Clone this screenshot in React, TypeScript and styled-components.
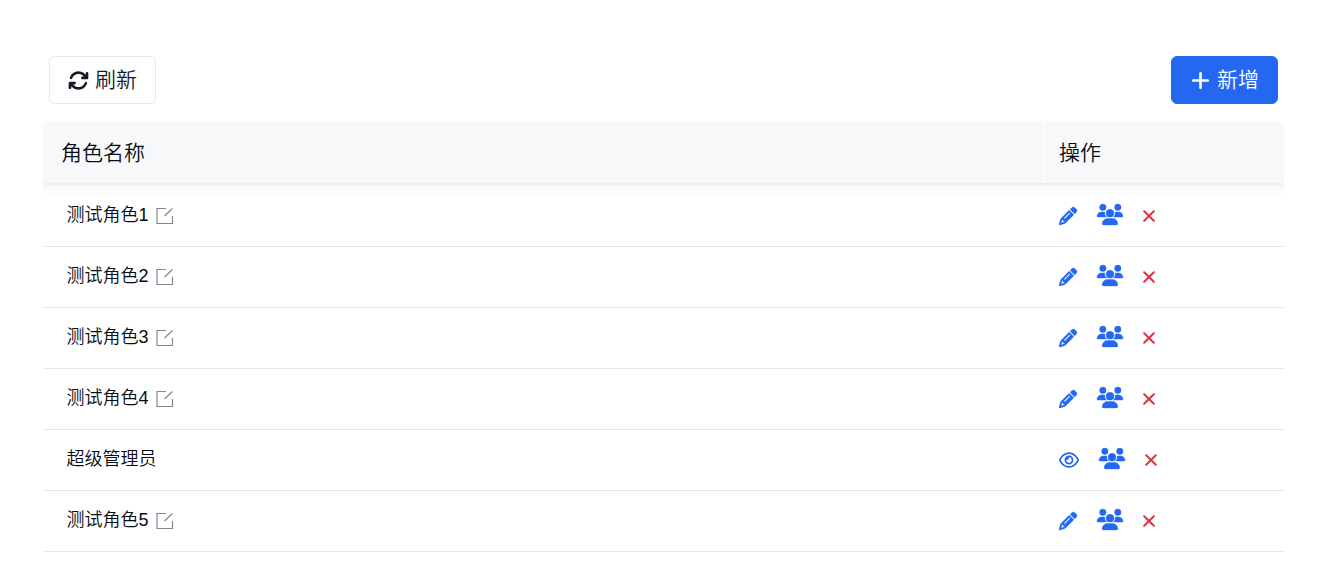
import React from 'react';
import styled, { createGlobalStyle } from 'styled-components';
import { FaArrowsRotate, FaPencil, FaPlus, FaRegEye, FaUsers } from 'react-icons/fa6';

const GlobalStyle = createGlobalStyle`
  * { box-sizing: border-box; }
  body {
    margin: 0;
    background: #fff;
    color: #080c14;
    font-family: "Liberation Sans", "Noto Sans CJK SC", sans-serif;
    font-weight: 350;
  }
`;

const Page = styled.main`
  width: 1326px;
  height: 567px;
  padding: 56px 42px 0 43px;
  overflow: hidden;
`;

const Toolbar = styled.div`
  display: flex;
  justify-content: space-between;
  padding: 0 6px;
  margin-bottom: 17px;
`;

const Button = styled.button<{ $primary?: boolean }>`
  display: flex;
  align-items: center;
  justify-content: center;
  gap: 6px;
  width: 107px;
  height: 48px;
  padding: 0;
  border: 1px solid ${(p) => (p.$primary ? '#2468f2' : '#e8e9eb')};
  border-radius: 6px;
  background: ${(p) => (p.$primary ? '#2468f2' : '#fff')};
  color: ${(p) => (p.$primary ? '#fff' : '#151b26')};
  font: inherit;
  font-size: 21px;
  line-height: 46px;
  svg { flex: none; }
`;

const Table = styled.div`
  width: 1241px;
`;

const Header = styled.div`
  position: relative;
  display: flex;
  height: 64px;
  margin-bottom: 1px;
  border-bottom: 2px solid #eceef0;
  border-radius: 6px 6px 0 0;
  background: #f7f8fa;
  font-size: 21px;
  line-height: 63px;
  &::after {
    content: '';
    position: absolute;
    top: 64px;
    left: 0;
    right: 0;
    height: 12px;
    background: linear-gradient(#f8f8f8, #fff);
  }
`;

const HeaderCell = styled.div<{ $actions?: boolean }>`
  width: ${(p) => (p.$actions ? '241px' : '1000px')};
  padding-left: ${(p) => (p.$actions ? '15px' : '18px')};
  border-left: ${(p) => (p.$actions ? '1px solid #fff' : 'none')};
`;

const Row = styled.div`
  display: flex;
  height: 61px;
  border-bottom: 1px solid #e8e9eb;
`;

const NameCell = styled.div`
  display: flex;
  align-items: center;
  gap: 8px;
  width: 1000px;
  padding: 0 0 1px 23.5px;
  font-size: 18px;
  line-height: 27px;
`;

const EditMark = styled.svg`
  margin-top: 1px;
  overflow: visible;
  fill: none;
  stroke: #84868c;
  stroke-width: 1.2;
`;

const ActionCell = styled.div`
  display: flex;
  align-items: center;
  width: 241px;
  padding: 0 0 0 16px;
  color: #2468f2;
`;

const PencilIcon = styled(FaPencil)`
  width: 18px;
  height: 18px;
  overflow: visible;
  stroke: #2468f2;
  stroke-width: 8;
`;

const UsersIcon = styled(FaUsers)`
  width: 26px;
  height: 21px;
  margin: -3px 20px 0 20px;
  overflow: visible;
  stroke: #2468f2;
  stroke-width: 10;
`;

const RemoveIcon = styled.svg`
  width: 12px;
  height: 12px;
  fill: none;
  stroke: #dc3545;
  stroke-width: 2;
  stroke-linecap: round;
`;

const roles = [
  { name: '测试角色1', editable: true },
  { name: '测试角色2', editable: true },
  { name: '测试角色3', editable: true },
  { name: '测试角色4', editable: true },
  { name: '超级管理员', editable: false },
  { name: '测试角色5', editable: true },
];

export default function App() {
  return (
    <Page>
      <GlobalStyle />
      <Toolbar>
        <Button><FaArrowsRotate size={21} /><span>刷新</span></Button>
        <Button $primary><FaPlus size={21} /><span>新增</span></Button>
      </Toolbar>
      <Table>
        <Header>
          <HeaderCell>角色名称</HeaderCell>
          <HeaderCell $actions>操作</HeaderCell>
        </Header>
        {roles.map((role) => (
          <Row key={role.name}>
            <NameCell>
              <span>{role.name}</span>
              {role.editable && (
                <EditMark width="17" height="17" viewBox="0 0 17 17">
                  <path d="M9 .5H0v15h15.5V8M7.5 8l8-7.5" />
                </EditMark>
              )}
            </NameCell>
            <ActionCell>
              {role.editable ? <PencilIcon /> : <FaRegEye size={20} />}
              <UsersIcon />
              <RemoveIcon viewBox="0 0 12 12">
                <path d="M1.2 1.2l9.6 9.6M10.8 1.2l-9.6 9.6" />
              </RemoveIcon>
            </ActionCell>
          </Row>
        ))}
      </Table>
    </Page>
  );
}
